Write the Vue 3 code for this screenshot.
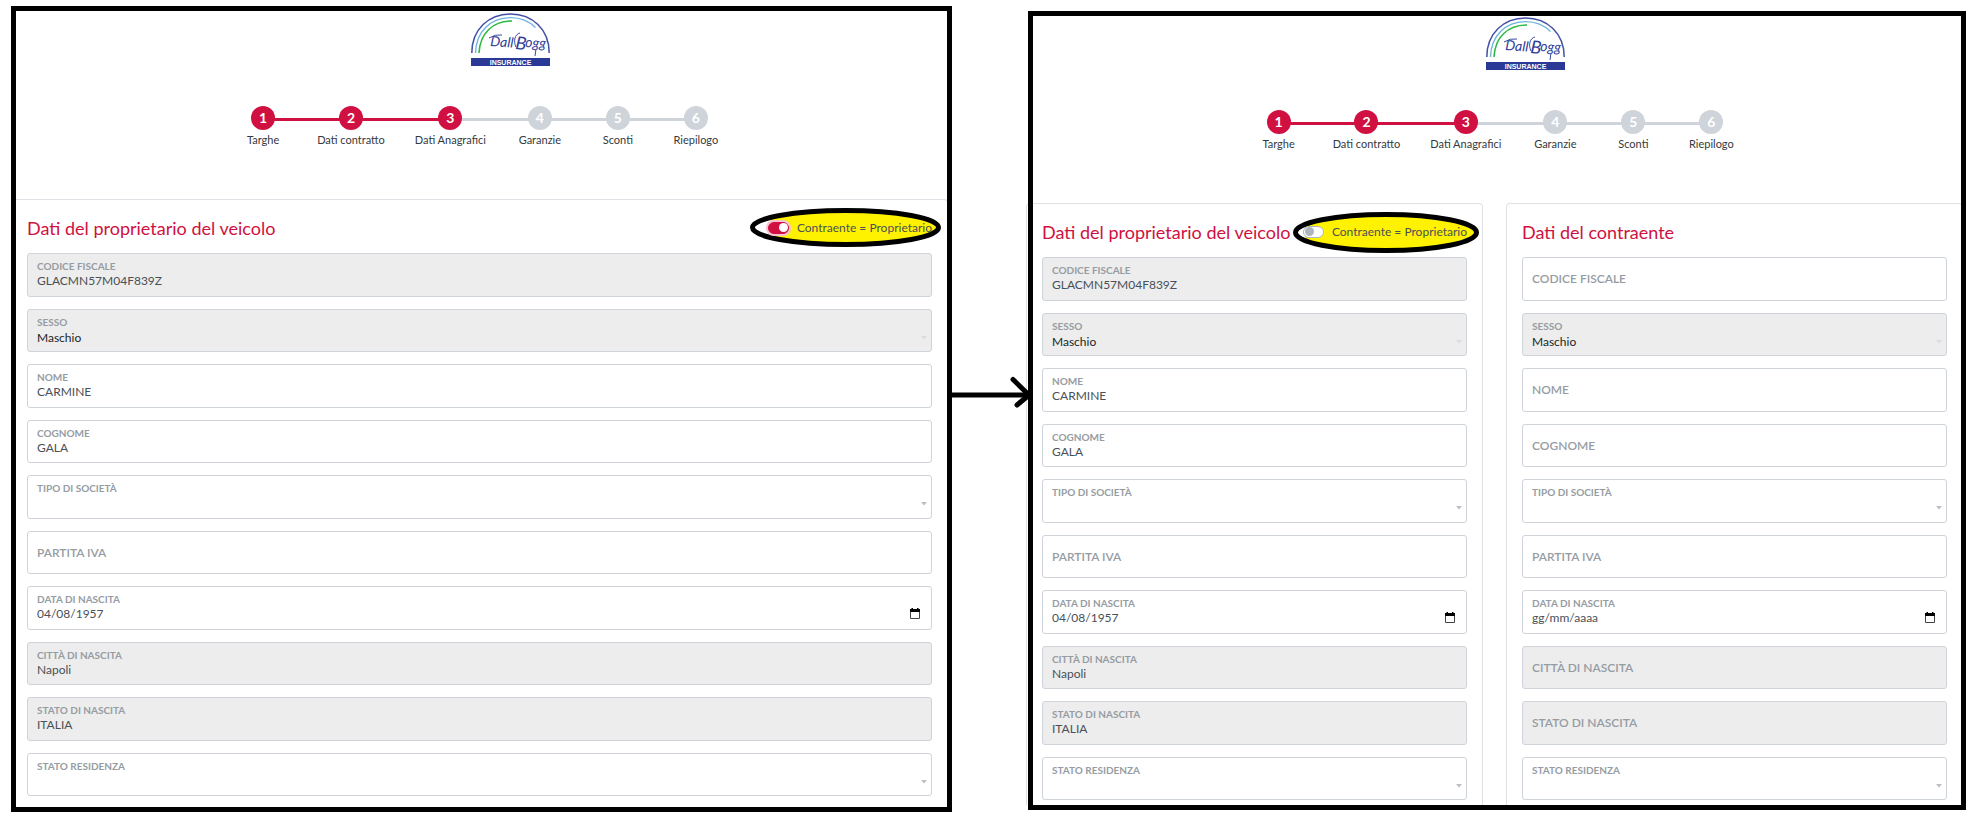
<script setup>
import { reactive } from 'vue'

const steps = ['Targhe', 'Dati contratto', 'Dati Anagrafici', 'Garanzie', 'Sconti', 'Riepilogo']
const currentStep = 3

const ownerFields = () => [
  { label: 'CODICE FISCALE', value: 'GLACMN57M04F839Z', type: 'text', disabled: true },
  { label: 'SESSO', value: 'Maschio', type: 'select', disabled: true },
  { label: 'NOME', value: 'CARMINE', type: 'text' },
  { label: 'COGNOME', value: 'GALA', type: 'text' },
  { label: 'TIPO DI SOCIETÀ', value: '', type: 'select' },
  { label: 'PARTITA IVA', value: '', type: 'text' },
  { label: 'DATA DI NASCITA', value: '04/08/1957', type: 'date' },
  { label: 'CITTÀ DI NASCITA', value: 'Napoli', type: 'text', disabled: true },
  { label: 'STATO DI NASCITA', value: 'ITALIA', type: 'text', disabled: true },
  { label: 'STATO RESIDENZA', value: '', type: 'select' },
]

const contractorFields = () =>
  ownerFields().map((f) => ({
    ...f,
    value: f.label === 'SESSO' ? 'Maschio' : '',
    disabled: f.label === 'CODICE FISCALE' ? false : f.disabled,
  }))

const panels = reactive([
  {
    id: 'same',
    cards: [{ title: 'Dati del proprietario del veicolo', toggle: true, same: true, fields: ownerFields() }],
  },
  {
    id: 'split',
    cards: [
      { title: 'Dati del proprietario del veicolo', toggle: true, same: false, fields: ownerFields() },
      { title: 'Dati del contraente', toggle: false, same: false, fields: contractorFields() },
    ],
  },
])

const floats = (f) => f.type !== 'text' || f.value !== ''
</script>

<template>
  <main class="board">
    <template v-for="(panel, p) in panels" :key="panel.id">
      <svg v-if="p === 1" class="arrow" height="36" aria-hidden="true">
        <line x1="0" y1="18" x2="100%" y2="18" />
        <svg x="100%" y="0" width="1" height="36" overflow="visible">
          <path d="M-15 2.500L1 18L-11 28" />
        </svg>
      </svg>

      <section class="panel" :class="panel.id">
        <header class="top">
          <svg class="logo" width="79" height="53" viewBox="0 0 79 53" role="img" aria-label="DallBogg Insurance">
            <path d="M.8 40C.8 16 18 .9 39.500 .9S78.200 16 78.200 40" fill="none" stroke="#4450a4" stroke-width="1.500" />
            <path d="M4.500 40C5 18 20 5 39 4.600C49 4.500 58 8 64.500 14.500" fill="none" stroke="#6db5e0" stroke-width="1.400" />
            <path d="M8 40C9 20 22 8 41 8" fill="none" stroke="#2fb944" stroke-width="1.600" />
            <text class="script" x="19" y="33" transform="rotate(4 19 33)">Dall</text>
            <text class="script big" x="44" y="36" transform="rotate(6 44 36)">B</text>
            <text class="script" x="54" y="34" transform="rotate(3 54 34)">ogg</text>
            <path d="M18 25Q24 21 31 22M45 34C42 28 44 21 49 20M65 36L64 43" fill="none" stroke="#3c49a0" stroke-width="1" />
            <rect y="45" width="79" height="8" fill="#2b3996" />
            <text class="caption" x="39.500" y="51.500">INSURANCE</text>
          </svg>
          <ol class="steps">
            <li
              v-for="(step, i) in steps"
              :key="step"
              :class="{ done: i < currentStep, linked: i < currentStep - 1 }"
            >
              <span class="dot">{{ i + 1 }}</span>
              <span class="name">{{ step }}</span>
            </li>
          </ol>
        </header>

        <div class="cards">
          <form v-for="(card, c) in panel.cards" :key="card.title" class="card" @submit.prevent>
            <div class="card-head">
              <h2>{{ card.title }}</h2>
              <label v-if="card.toggle" class="switch">
                <svg v-if="panel.id === 'same'" class="marker" width="191" height="39" viewBox="0 0 191 39" aria-hidden="true">
                  <ellipse cx="95.500" cy="19.500" rx="93" ry="17" fill="#fff" />
                  <path d="M21 8C45 3 70 2.500 95 2.500C145 2.500 188 10 188 19.500S145 36.500 95 36.500C70 36.500 45 35 21 30Z" fill="#fff200" />
                  <ellipse cx="95.500" cy="19.500" rx="93" ry="17" fill="none" stroke="#000" stroke-width="5" />
                </svg>
                <svg v-else class="marker" width="186" height="41" viewBox="0 0 186 41" aria-hidden="true">
                  <ellipse cx="93" cy="20.500" rx="90.500" ry="18" fill="#fff" />
                  <path d="M12 13C35 3 65 2.500 93 2.500C142 2.500 183 10 183 20.500S142 38.500 93 38.500C60 38.500 30 35 12 26Z" fill="#fff200" />
                  <ellipse cx="93" cy="20.500" rx="90.500" ry="18" fill="none" stroke="#000" stroke-width="5" />
                </svg>
                <input v-model="card.same" type="checkbox" />
                <span>Contraente = Proprietario</span>
              </label>
            </div>

            <div class="fields">
              <div
                v-for="(f, i) in card.fields"
                :key="f.label"
                class="field"
                :class="{ disabled: f.disabled, floating: floats(f) }"
              >
                <label :for="`${panel.id}-${c}-${i}`">{{ f.label }}</label>
                <select v-if="f.type === 'select'" :id="`${panel.id}-${c}-${i}`" v-model="f.value" :disabled="f.disabled">
                  <option value=""></option>
                  <option>Maschio</option>
                </select>
                <input
                  v-else
                  :id="`${panel.id}-${c}-${i}`"
                  v-model="f.value"
                  type="text"
                  :placeholder="f.type === 'date' ? 'gg/mm/aaaa' : ''"
                  :disabled="f.disabled"
                />
                <svg v-if="f.type === 'select'" class="caret" width="6" height="4" viewBox="0 0 6 4" aria-hidden="true">
                  <path d="M0 0H6L3 3.500Z" />
                </svg>
                <button v-if="f.type === 'date'" class="calendar" type="button" aria-label="Apri calendario">
                  <svg width="10" height="11" viewBox="0 0 10 11">
                    <path d="M.5 2H9.500V10.500H.5Z" fill="none" stroke="#444" />
                    <path d="M0 1H10V4H0ZM1.500 0H3V1H1.500ZM7 0H8.500V1H7Z" fill="#000" />
                  </svg>
                </button>
              </div>
            </div>
          </form>
        </div>
      </section>
    </template>
  </main>
</template>

<style>
body {
  background: #fff;
}
</style>

<style scoped>
.board {
  display: grid;
  grid-template-columns: 941fr 76px 938fr;
  align-items: start;
  padding: 6px 10px 0 11px;
  font-family: Lato, sans-serif;
  font-size: 12px;
  color: #343a40;
}
.board *,
.board *::before,
.board *::after {
  box-sizing: border-box;
}
.arrow {
  display: block;
  width: 100%;
  margin-top: 371px;
  overflow: visible;
  position: relative;
  z-index: 2;
  fill: none;
  stroke: #000;
  stroke-width: 5;
}
.arrow path {
  stroke-linecap: round;
}
.panel {
  position: relative;
  padding: 7px 5px 16px;
}
.panel.split {
  margin-top: 5px;
  padding: 6px 5px 5px;
}
.panel::after {
  content: '';
  position: absolute;
  inset: 0;
  border: 5px solid #000;
  pointer-events: none;
}
.top {
  display: flex;
  flex-direction: column;
  align-items: center;
  gap: 40px;
  padding-bottom: 51px;
}
.logo {
  display: block;
  margin-left: 57px;
}
.script {
  font: italic 400 14px Lato, sans-serif;
  fill: #2f3d99;
}
.script.big {
  font-size: 18px;
}
.caption {
  font: 700 7px 'Liberation Sans', sans-serif;
  text-anchor: middle;
  fill: #fff;
}
.steps {
  display: flex;
  gap: 30px;
  margin: 0 4px 0 0;
  padding: 0;
  list-style: none;
}
.steps li {
  position: relative;
  display: flex;
  flex-direction: column;
  align-items: center;
  gap: 2px;
  min-width: 48px;
}
.steps li + li::before,
.steps li:not(:last-child)::after {
  content: '';
  position: absolute;
  top: 12px;
  height: 3px;
  background: #ced4da;
}
.steps li + li::before {
  left: -30px;
  right: 50%;
}
.steps li:not(:last-child)::after {
  left: 50%;
  right: 0;
}
.steps li.done + li.done::before,
.steps li.linked:not(:last-child)::after {
  background: #d01040;
}
.dot {
  position: relative;
  z-index: 1;
  width: 24px;
  height: 24px;
  border-radius: 50%;
  background: #ced4da;
  color: #fff;
  font-size: 14px;
  font-weight: 700;
  line-height: 24px;
  text-align: center;
}
.done .dot {
  background: #d01040;
}
.name {
  font-size: 11px;
  line-height: 16px;
  white-space: nowrap;
}
.cards {
  display: flex;
  gap: 23px;
  margin: 0 -1px 0 -5px;
}
.split .cards {
  margin: 0 -2px 0 -7px;
}
.card {
  flex: 1 1 0;
  min-width: 0;
  padding: 15px 15px 0;
  border: 1px solid #dee2e6;
  border-bottom: 0;
  border-radius: 4px 4px 0 0;
}
.split .card {
  padding-bottom: 5px;
}
.card-head {
  display: flex;
  justify-content: space-between;
  align-items: center;
  height: 26px;
  margin-bottom: 12px;
}
h2 {
  margin: 0;
  color: #d01040;
  font-size: 18px;
  font-weight: 400;
  line-height: 26px;
  white-space: nowrap;
}
.switch {
  position: relative;
  display: flex;
  align-items: center;
  gap: 8px;
  color: #495057;
  white-space: nowrap;
  line-height: 16px;
}
.switch span {
  position: relative;
}
.marker {
  position: absolute;
  top: -12px;
  right: -9px;
}
.split .marker {
  right: -12px;
}
.switch input {
  position: relative;
  appearance: none;
  width: 21px;
  height: 12px;
  margin: 0;
  border: 1px solid #adb5bd;
  border-radius: 6px;
  background: #fff;
}
.switch input::before {
  content: '';
  display: block;
  width: 9px;
  height: 9px;
  margin: 0 0 0 1px;
  border-radius: 50%;
  background: #adb5bd;
}
.switch input:checked {
  border-color: #d01040;
  background: #d01040;
  box-shadow: 0 0 0 2px #f6c3cf;
}
.switch input:checked::before {
  margin-left: 10px;
  background: #fff;
}
.fields {
  display: flex;
  flex-direction: column;
  gap: 12px;
}
.field {
  display: grid;
  position: relative;
  height: 44px;
  border: 1px solid #ced4da;
  border-radius: 3px;
  background: #fff;
}
.field:nth-child(even) {
  height: 43px;
}
.field.disabled {
  background: #ededed;
}
.field > label,
.field > input,
.field > select {
  grid-area: 1 / 1;
}
.field > label {
  align-self: center;
  justify-self: start;
  margin-left: 9px;
  color: #969ca3;
  font-weight: 600;
  line-height: 14px;
  pointer-events: none;
}
.field.floating > label {
  align-self: start;
  margin-top: 5px;
  font-size: 10px;
  font-weight: 700;
}
.field > input,
.field > select {
  appearance: none;
  width: 100%;
  min-width: 0;
  margin: 0;
  padding: 11px 30px 0 9px;
  border: 0;
  background: transparent;
  color: #495057;
  font: 400 12px Lato, sans-serif;
  opacity: 1;
}
.field > select {
  color: #212529;
  padding-top: 14px;
}
.field > input::placeholder {
  color: #495057;
  opacity: 1;
}
.caret {
  position: absolute;
  right: 4px;
  top: 26px;
  fill: #bfbfbf;
  pointer-events: none;
}
.disabled .caret {
  fill: #dcdcdc;
}
.calendar {
  position: absolute;
  right: 11px;
  top: 21px;
  padding: 0;
  border: 0;
  background: none;
  line-height: 0;
}
</style>
